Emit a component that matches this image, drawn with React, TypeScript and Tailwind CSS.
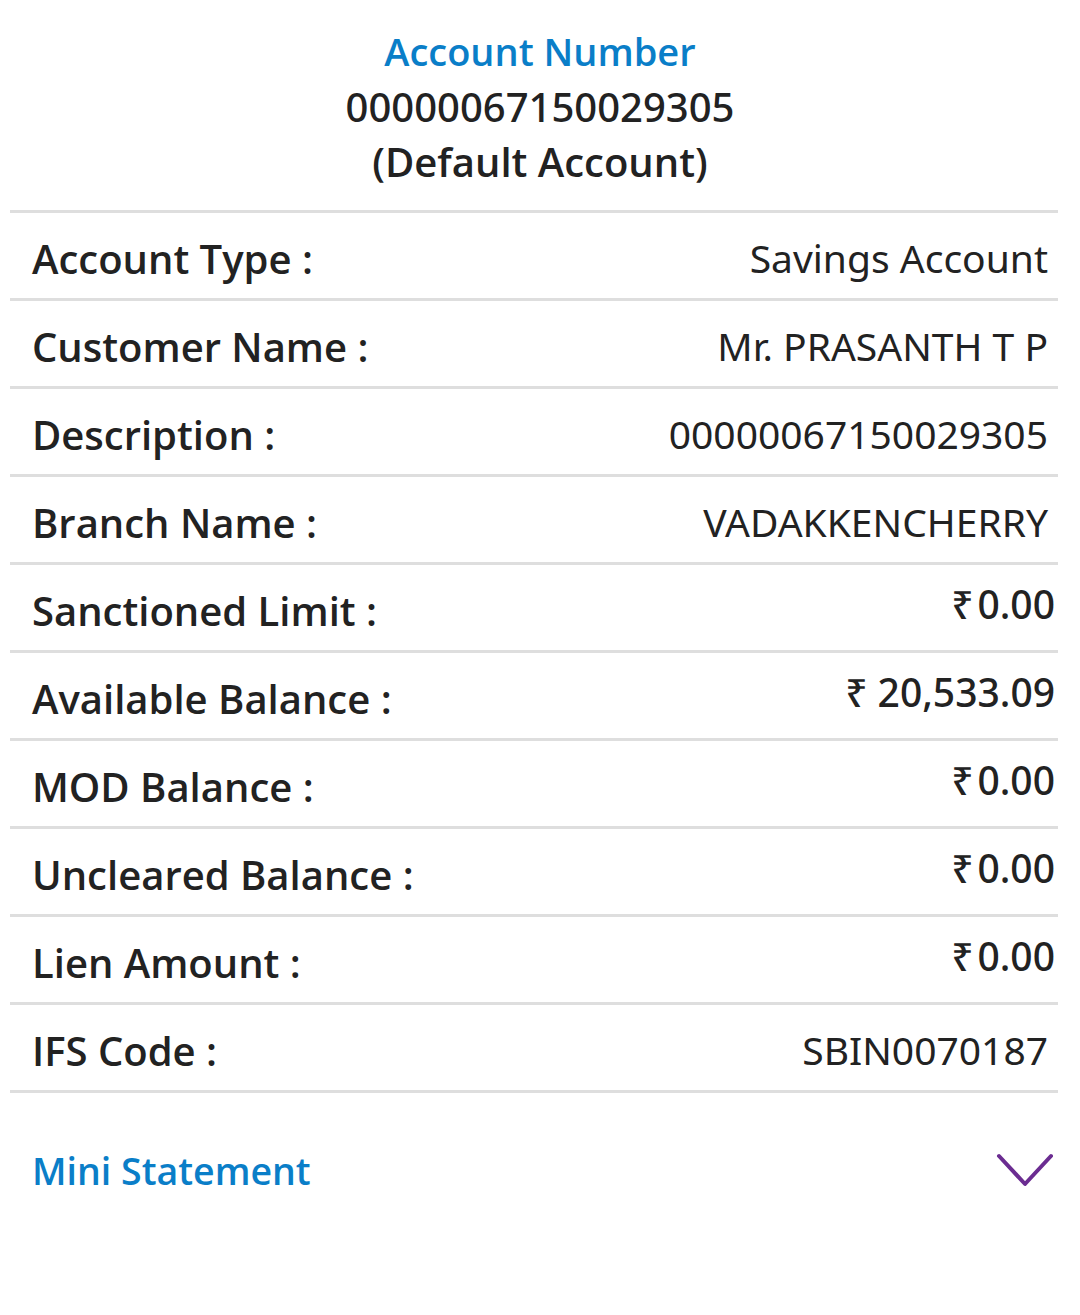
import React from "react";

const rows: { label: string; value: string; money?: boolean }[] = [
  { label: "Account Type :", value: "Savings Account" },
  { label: "Customer Name :", value: "Mr. PRASANTH T P" },
  { label: "Description :", value: "00000067150029305" },
  { label: "Branch Name :", value: "VADAKKENCHERRY" },
  { label: "Sanctioned Limit :", value: "₹\u200a0.00", money: true },
  { label: "Available Balance :", value: "₹ 20,533.09", money: true },
  { label: "MOD Balance :", value: "₹\u200a0.00", money: true },
  { label: "Uncleared Balance :", value: "₹\u200a0.00", money: true },
  { label: "Lien Amount :", value: "₹\u200a0.00", money: true },
  { label: "IFS Code :", value: "SBIN0070187" },
];

export default function App() {
  return (
    <main className="min-h-[1315px] w-[1080px] bg-white font-['Open_Sans',sans-serif] text-[#222]">
      {/* header */}
      <section className="flex flex-col items-center pt-[24px] pb-[21px] leading-[55px]">
        <h1 className="text-[38px] font-semibold text-[#0a7ec8]">Account Number</h1>
        <p className="font-['Noto_Sans',sans-serif] text-[40px] font-medium">00000067150029305</p>
        <p className="text-[40px] font-semibold">(Default Account)</p>
      </section>

      {/* details */}
      <div className="ml-[10px] mr-[22px] border-t-[3px] border-[#dedede]">
        {rows.map((r) => (
          <div
            key={r.label}
            className="flex h-[88px] items-center justify-between border-b-[3px] border-[#dedede] pt-[6px] pl-[22px]"
          >
            <span className="text-[40px] font-semibold">{r.label}</span>
            {r.money ? (
              <span className="-mt-[12px] pr-[3px] font-['Noto_Sans',sans-serif] text-[39px] font-medium">{r.value}</span>
            ) : (
              <span className="pr-[10px] font-['Noto_Sans',sans-serif] text-[39px]">{r.value}</span>
            )}
          </div>
        ))}
      </div>

      {/* mini statement */}
      <div className="ml-[10px] mr-[22px] flex items-center justify-between pt-[50px] pl-[22px] pr-[4px]">
        <span className="text-[37.5px] font-semibold text-[#0a7ec8]">Mini Statement</span>
        <svg width="58" height="36" viewBox="0 0 58 36" fill="none">
          <path d="M3 3 L29 31 L55 3" stroke="#6b2c91" strokeWidth="4" strokeLinecap="round" strokeLinejoin="round" />
        </svg>
      </div>
    </main>
  );
}
